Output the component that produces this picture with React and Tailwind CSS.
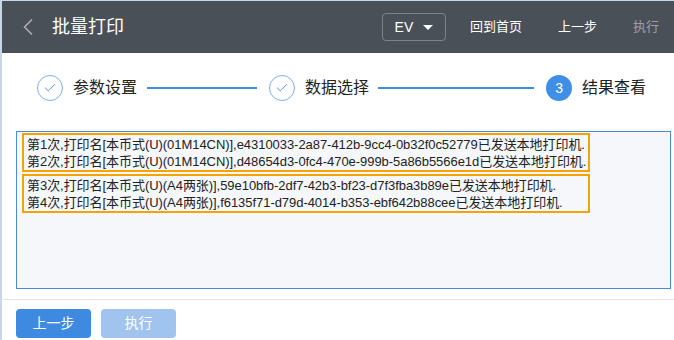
import { ChevronLeft, Check } from "lucide-react";

const FONT = {
  fontFamily: '"Liberation Sans", Arial, "Noto Sans CJK SC", sans-serif',
};

const LINES = [
  [
    "第1次,打印名[本币式(U)(01M14CN)],e4310033-2a87-412b-9cc4-0b32f0c52779已发送本地打印机.",
    "第2次,打印名[本币式(U)(01M14CN)],d48654d3-0fc4-470e-999b-5a86b5566e1d已发送本地打印机.",
  ],
  [
    "第3次,打印名[本币式(U)(A4两张)],59e10bfb-2df7-42b3-bf23-d7f3fba3b89e已发送本地打印机.",
    "第4次,打印名[本币式(U)(A4两张)],f6135f71-d79d-4014-b353-ebf642b88cee已发送本地打印机.",
  ],
];

const StepDone = ({ label }) => (
  <div className="flex items-center">
    <div className="w-[26px] h-[26px] rounded-full border border-[#7fb0ee] flex items-center justify-center">
      <Check className="w-3.5 h-3.5 text-[#4a8be0]" strokeWidth={1.6} />
    </div>
    <span className="ml-[10px] text-[16px] text-[#222]">{label}</span>
  </div>
);

const Line = ({ w }) => <div className={`h-[2px] bg-[#3f8fe8] ${w}`} />;

export default function App() {
  return (
    <div
      className="w-[674px] h-[340px] bg-white overflow-hidden border-l-2 border-t border-[#c9d6e6]"
      style={FONT}
    >
      {/* header */}
      <div className="h-[52px] bg-[#4a5058] flex items-center">
        <ChevronLeft className="w-7 h-7 ml-[12px] text-[#a9adb2]" strokeWidth={1.5} />
        <span className="ml-[10px] text-[18px] text-white">批量打印</span>
        <div className="ml-auto flex items-center">
          <div className="w-[64px] h-[28px] border border-[#7c8289] rounded-[4px] flex items-center justify-center text-[14px] text-white">
            EV
            <span className="ml-[10px] w-0 h-0 border-l-[5px] border-r-[5px] border-t-[5px] border-l-transparent border-r-transparent border-t-white" />
          </div>
          <span className="ml-[24px] text-[13px] text-white">回到首页</span>
          <span className="ml-[36px] text-[13px] text-white">上一步</span>
          <span className="ml-[36px] mr-[15px] text-[13px] text-[#9da1a6]">执行</span>
        </div>
      </div>

      {/* steps */}
      <div className="h-[70px] flex items-center pl-[35px]">
        <StepDone label="参数设置" />
        <div className="ml-[10px]"><Line w="w-[110px]" /></div>
        <div className="ml-[12px]"><StepDone label="数据选择" /></div>
        <div className="ml-[9px]"><Line w="w-[156px]" /></div>
        <div className="ml-[12px] flex items-center">
          <div className="w-[26px] h-[26px] rounded-full bg-[#3f8fe8] flex items-center justify-center text-[14px] text-white">
            3
          </div>
          <span className="ml-[10px] text-[16px] text-[#222]">结果查看</span>
        </div>
      </div>

      {/* result box */}
      <div className="pl-[14px] pr-[3px] pt-[8px]">
        <div className="h-[158px] border border-[#4a8ad8] bg-[#f5f7fa] pt-px px-[5px] flex flex-col gap-[2px]">
          {LINES.map((group, i) => (
            <div
              key={i}
              className="w-[568px] border-2 border-[#f5a300] px-[3px] pt-[1px] text-[13px] leading-[17px] text-[#222] whitespace-nowrap tracking-[-0.05px]"
            >
              {group.map((t) => (
                <div key={t}>{t}</div>
              ))}
            </div>
          ))}
        </div>
      </div>

      {/* footer */}
      <div className="mt-[10px] border-t border-[#e4e6e8] flex gap-[10px] pl-[14px] pt-[9px]">
        <button className="w-[75px] h-[29px] rounded-[4px] bg-[#3d8ae0] text-white text-[14px]">
          上一步
        </button>
        <button className="w-[75px] h-[29px] rounded-[4px] bg-[#a0c4ee] text-white text-[14px]">
          执行
        </button>
      </div>
    </div>
  );
}
